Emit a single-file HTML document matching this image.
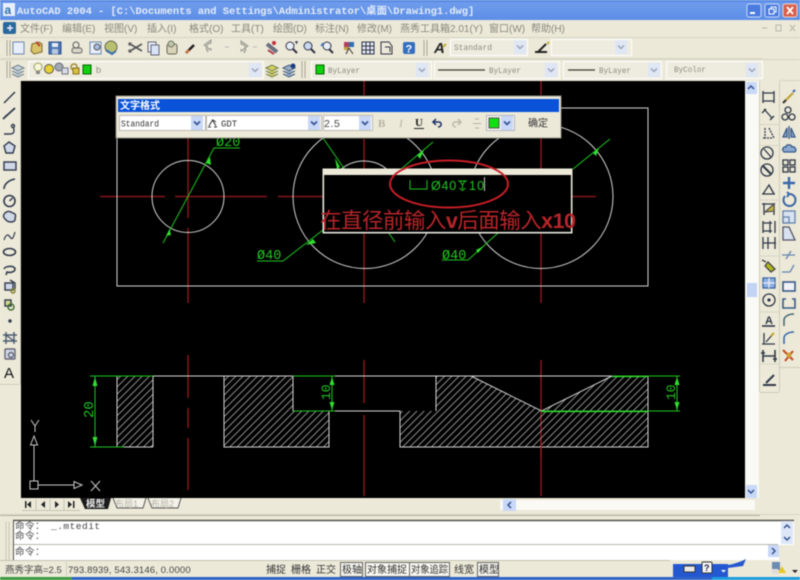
<!DOCTYPE html>
<html><head><meta charset="utf-8">
<style>
html,body{margin:0;padding:0;width:800px;height:580px;overflow:hidden;background:#ece9d8}
svg{display:block;filter:blur(0.5px)}
text{font-family:"Liberation Sans","Noto Sans CJK SC",sans-serif}
.m{font-family:"Liberation Mono","Noto Sans CJK SC",monospace}
.mn{font-size:10px;fill:#8a887c}
.cb{fill:#eeecdf;stroke:#fff;stroke-width:1}
.g{font-size:8px;fill:#8e8c80}
.w{stroke:#d4d4d4;fill:none;stroke-width:1}
.gr{stroke:#1fc41f;fill:none;stroke-width:1}
.r{stroke:#9c1a1e;fill:none;stroke-width:1.3}
.st{font-size:10px;fill:#333}
</style></head><body>
<svg width="800" height="580" viewBox="0 0 800 580" xmlns="http://www.w3.org/2000/svg">
<defs>
<linearGradient id="tb" x1="0" y1="0" x2="0" y2="1"><stop offset="0" stop-color="#4a80e2"/><stop offset=".15" stop-color="#6f9cec"/><stop offset="1" stop-color="#5c8ee6"/></linearGradient>
<pattern id="h" width="7.2" height="7.2" patternUnits="userSpaceOnUse"><path d="M-1 8.2L8.2 -1M-1 1L1 -1M6.2 8.2L8.2 6.2" stroke="#a8a8a8" stroke-width=".8"/></pattern>
<g id="ar"><rect x="-6" y="-7" width="12" height="14" fill="#dfe6f4"/><path d="M-3 -1.5L0 1.5L3 -1.5" fill="none" stroke="#9aa3b8" stroke-width="1.5"/></g>
<g id="ad"><rect x="-6" y="-7" width="12" height="14" fill="#c9d8f6"/><path d="M-3 -1.5L0 1.5L3 -1.5" fill="none" stroke="#33518f" stroke-width="1.6"/></g>
</defs>
<rect width="800" height="580" fill="#ece9d8"/>

<!-- title bar -->
<rect width="800" height="20" fill="url(#tb)"/>
<rect x="3" y="3" width="12" height="13" fill="#e8f0fb"/>
<text x="4.5" y="14" font-size="12" font-weight="bold" fill="#2a6fb0">a</text>
<text class="m" x="17" y="14" font-size="10.4" font-weight="bold" fill="#e4ecfa">AutoCAD 2004 - [C:\Documents and Settings\Administrator\桌面\Drawing1.dwg]</text>
<rect x="747" y="4" width="14" height="13" rx="2" fill="#4a7be0" stroke="#c9d8f6"/><rect x="750" y="12" width="5" height="2" fill="#fff"/>
<rect x="765" y="4" width="14" height="13" rx="2" fill="#4a7be0" stroke="#c9d8f6"/><path d="M769 9h5v5h-5zM771 9V7h5v5h-2" fill="none" stroke="#fff"/>
<rect x="783" y="4" width="14" height="13" rx="2" fill="#d9604a" stroke="#f0d0c8"/><path d="M787 7L793 14M793 7L787 14" stroke="#fff" stroke-width="1.8"/>

<!-- menu -->
<rect x="3" y="22" width="13" height="12" rx="2" fill="#28689c"/><path d="M7 28h6M10 25v6" stroke="#eef" stroke-width="1.5"/>
<text class="mn" x="20" y="32">文件(F)</text><text class="mn" x="62" y="32">编辑(E)</text><text class="mn" x="104" y="32">视图(V)</text><text class="mn" x="147" y="32">插入(I)</text><text class="mn" x="189" y="32">格式(O)</text><text class="mn" x="231" y="32">工具(T)</text><text class="mn" x="273" y="32">绘图(D)</text><text class="mn" x="315" y="32">标注(N)</text><text class="mn" x="357" y="32">修改(M)</text><text class="mn" x="400" y="32">燕秀工具箱2.01(Y)</text><text class="mn" x="489" y="32">窗口(W)</text><text class="mn" x="531" y="32">帮助(H)</text>
<path d="M762 28h5M776 25h5v6h-5zM790 25l5 6M795 25l-5 6" stroke="#b8b6a8" fill="none"/>

<!-- toolbar 1 -->
<path d="M0 37.5H800M0 58.5H762M0 59.5H800" stroke="#d8d5c4"/>
<path d="M7 40v16M10 40v16" stroke="#aaa796"/>
<path d="M424 40v16M427 40v16" stroke="#aaa796"/>
<rect x="13" y="42" width="11" height="12" fill="#e8eefa" stroke="#6d86b0"/>
<path d="M32 44l7 -2 3 2v8l-8 2-3-3z" fill="#d9c36a" stroke="#7a6a30"/><path d="M36 42l4 4" stroke="#c04030" stroke-width="2"/>
<rect x="49" y="42" width="12" height="12" fill="#4d77b5" stroke="#2f4f88"/><rect x="52" y="43" width="6" height="4" fill="#e6edf8"/><rect x="52" y="49" width="6" height="5" fill="#b8c8e0"/>
<circle cx="76" cy="45" r="3" fill="none" stroke="#555"/><rect x="72" y="48" width="10" height="5" fill="#d8d4c8" stroke="#666" rx="2"/>
<rect x="90" y="42" width="11" height="12" fill="#e8eefa" stroke="#6d86b0"/><circle cx="97" cy="47" r="3" fill="#a8bde0" stroke="#555"/>
<circle cx="111" cy="47" r="6" fill="#b8c070" stroke="#665"/><path d="M106 50l6 4 4-3" fill="none" stroke="#3e6fb5" stroke-width="2"/>
<path d="M130 44l12 7M130 51l12-7" stroke="#555" stroke-width="1.6"/><circle cx="130" cy="44" r="1.8" fill="#666"/><circle cx="130" cy="51" r="1.8" fill="#666"/>
<rect x="148" y="42" width="8" height="10" fill="#e8eefa" stroke="#667"/><rect x="151" y="45" width="8" height="10" fill="#d8e4f6" stroke="#667"/>
<rect x="167" y="44" width="10" height="10" rx="2" fill="#d8d3b8" stroke="#665"/><circle cx="171" cy="44" r="3" fill="#bcc8a8" stroke="#776"/>
<path d="M186 53l8-8" stroke="#222" stroke-width="2.6"/><path d="M186 53l3-3" stroke="#c87040" stroke-width="2.6"/>
<path d="M208 52c-3-3-2-8 3-9v-3l-7 5 7 5v-2" fill="#c9c9bc" stroke="#9a9a90"/><path d="M225 47h4" stroke="#bbb"/>
<path d="M244 53c3-3 2-8-3-9v-3l7 5-7 5v-2" fill="#c9c9bc" stroke="#9a9a90"/><path d="M253 47h4" stroke="#bbb"/>
<path d="M267 44l10 8" stroke="#6a7080" stroke-width="4"/><circle cx="274" cy="43" r="2" fill="#bf3040"/><path d="M268 50l6 4" stroke="#b04050" stroke-width="2"/>
<circle cx="290" cy="46" r="4" fill="#e6edf8" stroke="#334"/><path d="M293 49l4 4" stroke="#334" stroke-width="2"/><path d="M295 42h3M296.5 41v3" stroke="#334"/>
<circle cx="308" cy="46" r="4" fill="#c8d8f0" stroke="#334"/><path d="M311 49l4 4" stroke="#334" stroke-width="2"/>
<circle cx="327" cy="46" r="4" fill="#e6edf8" stroke="#334"/><path d="M329 49l4 4" stroke="#334" stroke-width="2"/><path d="M323 43l-2 3" stroke="#3a7ad0" stroke-width="1.5"/>
<rect x="344" y="42" width="5" height="5" fill="#b04060"/><rect x="349" y="42" width="5" height="5" fill="#3070b0"/><rect x="344" y="47" width="5" height="3" fill="#c0a040"/><path d="M349 48l-3 6M349 48l4 6" stroke="#333"/>
<rect x="362" y="42" width="12" height="12" fill="#dfe7f4" stroke="#334"/><path d="M362 46h12M362 50h12M366 42v12M370 42v12" stroke="#334"/>
<path d="M381 42h8l3 4v8h-11z" fill="#ece9d8" stroke="#334"/><path d="M385 47h5v5" stroke="#334" fill="none"/>
<rect x="403" y="42" width="12" height="12" rx="2" fill="#356fc0"/><text x="405.5" y="52.5" font-size="11" font-weight="bold" fill="#fff">?</text>
<text x="434" y="53" font-size="15" font-weight="bold" font-style="italic" fill="#252525">A</text><path d="M443 47l3-3" stroke="#c0b040" stroke-width="2"/>
<rect x="450.500" y="39.500" width="77" height="16" class="cb"/><text class="m g" x="454" y="50" style="font-size:8px" textLength="38" lengthAdjust="spacingAndGlyphs">Standard</text><use href="#ar" x="520" y="47"/>
<path d="M535 52h12M538 52l8-8" stroke="#222" stroke-width="2"/><path d="M547 44l2-2" stroke="#c0b040" stroke-width="2"/>
<rect x="551.500" y="39.500" width="80" height="16" class="cb"/><use href="#ar" x="621" y="47"/>

<!-- toolbar 2 -->
<path d="M7 61v17M10 61v17M302 61v17M305 61v17" stroke="#aaa796"/>
<path d="M12 68l6-3 6 3-6 3zM12 71l6 3 6-3M12 74l6 3 6-3" fill="#c7d0d8" stroke="#6d7f8e"/>
<rect x="28.500" y="61.500" width="235" height="17" class="cb"/>
<circle cx="38" cy="67" r="4" fill="#f6f6d8" stroke="#a0a060"/><rect x="36" y="71" width="4" height="3" fill="#888"/>
<circle cx="49" cy="69" r="4.5" fill="#e8d030" stroke="#555"/>
<circle cx="59" cy="67" r="4" fill="#a0aab0" stroke="#667"/><rect x="62" y="68" width="6" height="6" fill="#d8dce4" stroke="#778"/>
<circle cx="74" cy="67" r="3" fill="none" stroke="#a08830" stroke-width="1.5"/><rect x="73" y="68" width="6" height="6" fill="#d8c040" stroke="#887020"/>
<rect x="83" y="65" width="8" height="9" fill="#10d010" stroke="#060"/>
<text class="g" x="96" y="73" style="font-size:9px">b</text>
<use href="#ar" x="255" y="70"/>
<path d="M266 68l6-3 6 3-6 3zM266 71l6 3 6-3M266 74l6 3 6-3" fill="#d8d060" stroke="#6d7f4e"/>
<path d="M283 68l6-3 6 3-6 3zM283 71l6 3 6-3M283 74l6 3 6-3" fill="#9eb0c8" stroke="#445a7e"/><circle cx="293" cy="66" r="2.5" fill="#1c3e80"/>
<rect x="311.500" y="61.500" width="120" height="17" class="cb"/><rect x="316" y="65" width="8" height="9" fill="#10d010" stroke="#060"/><text class="m g" x="328" y="73" textLength="32" lengthAdjust="spacingAndGlyphs">ByLayer</text><use href="#ar" x="422" y="70"/>
<rect x="434.500" y="61.500" width="125" height="17" class="cb"/><path d="M438 70h47" stroke="#3a3a30" stroke-width="1.2"/><text class="m g" x="489" y="73" textLength="32" lengthAdjust="spacingAndGlyphs">ByLayer</text><use href="#ar" x="551" y="70"/>
<rect x="563.500" y="61.500" width="98" height="17" class="cb"/><path d="M568 70h27" stroke="#3a3a30" stroke-width="1.2"/><text class="m g" x="599" y="73" textLength="32" lengthAdjust="spacingAndGlyphs">ByLayer</text><use href="#ar" x="654" y="70"/>
<rect x="666.500" y="61.500" width="96" height="17" class="cb"/><text class="m g" x="674" y="72" textLength="32" lengthAdjust="spacingAndGlyphs">ByColor</text><use href="#ar" x="752" y="70"/>

<!-- drawing -->
<rect x="21" y="81" width="724" height="417" fill="#000"/>
<!-- scrollbars -->
<rect x="745" y="81" width="14" height="419" fill="#f9f9f5"/>
<rect x="746" y="82" width="11" height="12" fill="#c9d8f6"/><path d="M748 89l3-3 3 3" fill="none" stroke="#33518f" stroke-width="1.5"/>
<rect x="747" y="283" width="10" height="14" fill="#c3d3f4"/>
<rect x="746" y="485" width="11" height="13" fill="#c9d8f6"/><path d="M748 490l3 3 3-3" fill="none" stroke="#33518f" stroke-width="1.5"/>

<g>
<!-- center lines -->
<path class="r" d="M188 138V218M188 228V303M364 81V95M364 139V303M541 81V95M541 138V303M100 196.5H165M175 196.5H267M278 196.5H325M338 196.5H490M503 196.5H515M526 196.5H596"/>
<path class="r" d="M188 355V398M188 408V428M188 438V490M364 360V403M364 415V496M541 360V496"/>
<!-- upper view -->
<path class="w" d="M117 138V286H648V108H561M117 108V96"/>
<circle class="w" cx="188" cy="196.5" r="36"/>
<circle class="w" cx="365" cy="196.5" r="72"/>
<circle class="w" cx="364" cy="197" r="36"/>
<circle class="w" cx="541" cy="196.5" r="72"/>
<!-- upper dims -->
<path class="gr" d="M163 243L214 148H240M257 261H283L323 230M323 138L395 242M433 142L400 170M573 169L610 139M498 233L468 260H442"/>
<path d="M166 236l3.5 -7 1.5 6zM210 157l-4 6 5 2zM306 245l7-6 3 4zM335 158l5 9-3 2z M424 150l-7 5 3 4zM599 148l-6 5 3 3zM484 246l-6 7-2-3z" fill="#2ee02e"/>
<text class="m" x="216" y="146" fill="#22c622" font-size="13.5">Ø20</text><text class="m" x="257" y="259" fill="#22c622" font-size="13.5">Ø40</text><text class="m" x="442" y="259" fill="#22c622" font-size="13.5">Ø40</text>

<!-- lower view hatch -->
<path d="M117 376H153V447H117z M224 376H293V411H329V447H224z M436 376H471L541.5 411L612 376H648V447H400V411H436z" fill="url(#h)"/>
<path class="w" d="M117 376H648V447H400V411H293V376M117 376V447M153 376V447M224 376V447H329V411M90 447H153M436 376V411M471 376L541.5 411L612 376"/>
<path class="r" d="M541 440V458" stroke-width="1"/>
<!-- lower dims -->
<path class="gr" d="M90 376H153M90 447H124M95 376V447M293 376H335M293 411H335M332 376V411M541 411H680M612 376H680M677 376V411"/>
<path stroke="#2ee02e" stroke-width="1.2" fill="none" d="M612 376.5H648M541 411.5H648"/>
<path d="M95 377l-2.5 9h5zM95 446l-2.5-9h5zM332 377l-2.5 8h5zM332 410l-2.5-8h5zM677 377l-2.5 8h5zM677 410l-2.5-8h5z" fill="#2ee02e"/>
<text class="m" transform="translate(93 418) rotate(-90)" fill="#22c622" font-size="14">20</text>
<text class="m" transform="translate(330 400) rotate(-90)" fill="#22c622" font-size="13">10</text>
<text class="m" transform="translate(675 400) rotate(-90)" fill="#22c622" font-size="13">10</text>
<!-- UCS -->
<g stroke="#c8c8c8" fill="none" stroke-width="1"><rect x="30" y="481" width="8" height="8"/><path d="M34 481V445M38 485H74M34 436l-3.5 9h7zM82 485l-8-3.5v7zM31 420l4 6 4-6M35 426v6M91 481l9 10M100 481l-9 10"/></g>
</g>

<!-- in-place editor -->
<rect x="323" y="169" width="249" height="64" fill="#000" stroke="#ece9d8"/>
<rect x="323" y="168.5" width="249" height="6.5" fill="#ece9d8"/>
<path d="M571.5 175V233M323 232.5H572M323.5 175V233" stroke="#e4e4dc" stroke-width="1.2"/>
<text x="320" y="228" font-size="21.5" fill="#b8252a" textLength="256">在直径前输入<tspan font-weight="bold">v</tspan>后面输入<tspan font-weight="bold">x10</tspan></text>
<ellipse cx="449" cy="184" rx="59" ry="23.5" fill="none" stroke="#c81e26" stroke-width="2"/>
<path d="M410 180v9h17v-9" fill="none" stroke="#24c024" stroke-width="1"/>
<text x="431" y="190" font-size="12.5" letter-spacing=".8" fill="#22c622">Ø40</text>
<path d="M458 181h9M460 181l2.5 4 2.500-4M462.5 185v4M459.500 188l3 2.500 3-2.500" fill="none" stroke="#22c622"/>
<text x="469" y="190" font-size="12.5" letter-spacing="1.2" fill="#22c622">10</text>
<path d="M484.5 177v14" stroke="#ccc"/>

<!-- mtext dialog -->
<rect x="116" y="96" width="445" height="42" fill="#ece9d8" stroke="#8f8d80"/>
<rect x="118" y="99" width="441" height="13" fill="#0a52d8"/>
<text x="120" y="109" font-size="10" font-weight="bold" fill="#fff">文字格式</text>
<rect x="119.500" y="115.500" width="86" height="15" fill="#fff" stroke="#bcbab0"/><text class="m" x="121" y="126.5" font-size="9" fill="#333" textLength="38" lengthAdjust="spacingAndGlyphs">Standard</text><use href="#ad" x="197" y="123"/>
<rect x="206.500" y="115.500" width="115" height="15" fill="#fff" stroke="#bcbab0"/><path d="M209 126l3.500-6 3.500 6M213 120l3 2M208 127h3M214 127h3" fill="none" stroke="#333"/><text class="m" x="221" y="126.5" font-size="9" fill="#333">GDT</text><use href="#ad" x="314" y="123"/>
<rect x="323.500" y="115.500" width="49" height="15" fill="#fff" stroke="#bcbab0"/><text x="324" y="127" font-size="10.5" letter-spacing=".6" fill="#444">2.5</text><use href="#ad" x="365" y="123"/>
<text x="378" y="127" font-size="11" font-weight="bold" fill="#b5b3a4" style="font-family:'Liberation Serif',serif">B</text>
<text x="399" y="127" font-size="11" font-style="italic" fill="#b5b3a4" style="font-family:'Liberation Serif',serif">I</text>
<text x="415" y="126" font-size="11" font-weight="bold" fill="#222" style="font-family:'Liberation Serif',serif">U</text><path d="M414 128.5h10" stroke="#222"/>
<path d="M433 122h6c3 0 3 5-1 5M436 119l-3 3 3 3" fill="none" stroke="#1c2f66" stroke-width="1.5"/>
<path d="M461 122h-6c-3 0-3 5 1 5M458 119l3 3-3 3" fill="none" stroke="#bbb9aa" stroke-width="1.5"/>
<path d="M475 119h4M473 123.5h8M475 128h4" stroke="#b5b3a4"/>
<rect x="486.500" y="115.500" width="28" height="15" fill="#f4f3ea" stroke="#b4b6c4"/><rect x="489" y="118" width="10" height="10" fill="#10e010" stroke="#555"/><use href="#ad" x="507" y="123"/>
<text x="528" y="126.5" font-size="10" fill="#333">确定</text>

<!-- left toolbar -->
<rect x="0" y="84" width="21" height="300" fill="#ece9d8"/><path d="M20.5 81V384M0 384.5H20" stroke="#d0cdbc"/>
<g style="fill:none;stroke:#2f3a4e;stroke-width:1.4">
<path d="M4 103L15 92"/><path d="M3 119L15 108M5 117l2-2M13 110l2-2" stroke-width="1.8"/>
<path d="M4 134h6c4 0 5-3 3-7"/><circle cx="13" cy="126" r="1.5"/>
<path d="M9 142l6 4-2 7H6l-2-7z" fill="#cfd8e6"/><rect x="4" y="162" width="12" height="8" fill="#cfd8e6"/>
<path d="M4 189c0-5 5-9 11-10" stroke-width="1.6"/>
<circle cx="9.5" cy="201" r="5.5" stroke-width="1.6"/><path d="M9.5 201l3-3"/>
<path d="M5 213c3-3 6-1 8 0 3 1 3 3 2 5 1 3-2 4-4 4-3 0-4-1-6-3-2-2-2-4 0-6z" fill="#cfd8e6"/>
<path d="M4 240c2-6 4-6 6-3s3 2 5-5" stroke-width="1.2"/>
<ellipse cx="9.5" cy="252" rx="6" ry="3.5" stroke-width="1.6"/>
<path d="M4 269c1-3 10-4 11 0 0 3-5 4-8 3l-1 3" stroke-width="1.6"/>
<rect x="5" y="283" width="8" height="7" fill="#cfd8e6"/><path d="M10 280l5 3v6"/><circle cx="13" cy="291" r="2" stroke="#7a7a20"/>
<rect x="5" y="300" width="6" height="6" fill="#d8d890"/><circle cx="11" cy="307" r="3" stroke="#3c6a2a"/>
<circle cx="10" cy="321" r="1" fill="#2f3a4e"/>
<path d="M6 332v12M14 332v12M3 335h14M3 341h14M6 335l8 6" stroke="#4a5a70"/>
<rect x="5" y="349" width="10" height="10" rx="1" fill="#cfd8e6" stroke="#667"/><circle cx="11" cy="355" r="2.5" stroke="#667"/>
</g>
<text x="4" y="378" font-size="15" fill="#111">A</text>

<!-- right toolbars -->
<path d="M759.5 81V392M760 392.5H779M779.5 81V392M780 367.5H800" stroke="#cfccba"/>
<path d="M760 124.5H779M760 145.5H779M760 200H779M760 256H779M760 312H779M760 364H779M780 80.5H800" stroke="#d8d5c4"/>
<g fill="none" stroke="#303848" stroke-width="1.3">
<path d="M763 91v12M774 91v12M763 93h11M763 101h11"/>
<path d="M764 109l8 9M762 113l4-4M770 120l4-4"/>
<path d="M765 128v10h8M769 128l5 10M763 138h2" stroke-dasharray="2 1"/>
<circle cx="767" cy="153" r="6"/><path d="M764 149l7 8"/>
<circle cx="767" cy="170" r="6"/><path d="M763 166l8 8" stroke-width="2"/>
<path d="M762 194h13M763 194l6-9 5 9"/>
<path d="M764 203v12M774 203v12M762 204h13"/><path d="M765 212l9-8v7z" fill="#c8b840" stroke="#555"/>
<path d="M763 221v12M770 221v12M763 223h9M763 231h9M775 221v12"/>
<path d="M763 237v12M768 237v12M775 237v12M763 243h13"/>
<path d="M762 260l4 2M768 262l7 7-4 3-6-6z" fill="#b0b820" stroke="#444"/>
<rect x="763" y="278" width="12" height="10" fill="#8fb0e0" stroke="#3a66a8"/><path d="M769 278v10M763 283h12" stroke="#e8eefa"/>
<circle cx="769" cy="300" r="6"/><circle cx="769" cy="300" r="1" fill="#303848"/>
<path d="M762 326h13" stroke-width="1.6"/><text x="765" y="324" font-size="11" font-weight="bold" fill="#303848" stroke="none">A</text>
<path d="M764 333v11M762 344h13M766 342l7-8"/><path d="M771 336l3-3" stroke="#c0a030" stroke-width="2"/>
<path d="M763 350v12M775 350v12M763 356h12M761 353h4M773 359h4" stroke-width="1.6"/>
<path d="M763 385h13M766 383l8-8" stroke-width="2"/>
<path d="M783 103l10-10" stroke="#c0a030" stroke-width="2"/><path d="M783 103l3-3" stroke="#3a3a3a" stroke-width="2"/><path d="M793 92l2-2" stroke="#4060c0" stroke-width="2"/>
<circle cx="785" cy="117" r="3"/><circle cx="792" cy="117" r="3"/><circle cx="788" cy="110" r="3"/>
<path d="M789 126v13M787 128l-4 9h4zM791 128l4 9h-4z" fill="#8aa8d0" stroke="#3a5a88"/>
<path d="M784 152c-3-3 0-6 2-5 0-3 5-3 6 0 3-1 5 3 3 5z" fill="#8aa8d0" stroke="#3a5a88"/>
<rect x="783" y="160" width="5" height="5"/><rect x="790" y="160" width="5" height="5"/><rect x="783" y="167" width="5" height="5"/><rect x="790" y="167" width="5" height="5"/>
<path d="M789 177v12M783 183h12" stroke="#3a66a8" stroke-width="2.4"/>
<path d="M785 196a6 6 0 1 0 4-2M787 192l2 2-2 3" stroke="#3a66a8" stroke-width="2"/>
<rect x="783" y="211" width="12" height="12" fill="#d8e2f0" stroke="#6685b0"/><rect x="783" y="217" width="6" height="6" stroke="#6685b0"/>
<path d="M783 240v-13h6l6 13z" fill="#d8e2f0" stroke="#556"/>
<path d="M782 255h13M786 259l5-8" stroke="#6685b0"/>
<path d="M782 272h8M790 272l4-7" stroke="#6685b0"/>
<rect x="783" y="282" width="12" height="9" fill="#f0f2f8" stroke="#3a5a88" stroke-width="1.6"/>
<path d="M786 299h-3v9h12v-9h-3" stroke="#3a5a88" stroke-width="1.6"/>
<path d="M784 326v-6c0-3 4-6 10-6" stroke="#4a6a70" stroke-width="1.6"/>
<path d="M784 344v-6c0-3 4-6 10-6" stroke="#3a6aa8" stroke-width="1.6"/>
<path d="M783 350l10 10M793 351l-8 10" stroke="#c04a20" stroke-width="2"/><circle cx="789" cy="355" r="2.5" fill="#d0a030" stroke="none"/>
</g>

<!-- tabs -->
<rect x="21" y="498" width="738" height="16" fill="#ece9d8"/>
<rect x="500" y="500" width="255" height="10" fill="#faf9f3"/>
<rect x="503" y="499" width="13" height="12" fill="#c9d8f6"/><path d="M511 502l-3 3 3 3" fill="none" stroke="#33518f" stroke-width="1.5"/>
<g fill="#222"><path d="M25 501v7h1.5v-7zM31 501l-4 3.5 4 3.5z"/><path d="M45 501l-4 3.5 4 3.5z"/><path d="M55 501l4 3.5-4 3.5z"/><path d="M68 501l4 3.5-4 3.5zM73 501v7h1.5v-7z"/></g>
<path d="M22 510.5H80M36 499v11M50 499v11M64 499v11" stroke="#c6c3b4"/>
<path d="M80 498h31l-3 11h-23z" fill="#1a1a1a"/><text x="86" y="507" font-size="9.5" font-weight="bold" fill="#eee">模型</text>
<path d="M113 498l4 10h26l3-10" fill="#f4f2e8" stroke="#555"/><text x="115" y="507" font-size="9" fill="#b5b3a4">布局1</text>
<path d="M148 498l4 10h26l3-10" fill="#f4f2e8" stroke="#555"/><text x="151" y="507" font-size="9" fill="#b5b3a4">布局2</text>

<!-- command window -->
<path d="M0 514.5H800" stroke="#d8d5c4"/><path d="M0 515.5H760" stroke="#b5b2a1"/>
<path d="M6 522v40M9 522v40" stroke="#c9c6b5"/>
<rect x="13" y="520" width="781" height="41" fill="#fff"/>
<path d="M13 520.5H794" stroke="#55524a" stroke-width="1.5"/><path d="M13.5 520V561" stroke="#55524a"/>
<path d="M14 544.5H778" stroke="#b8b6aa"/>
<text x="15" y="529" font-size="9.5" fill="#444" letter-spacing=".5">命令：</text><text class="m" x="51" y="529" font-size="9.5" fill="#444" letter-spacing=".5">_.mtedit</text>
<text x="15" y="539" font-size="9.5" fill="#444" letter-spacing=".5">命令：</text>
<text x="15" y="555" font-size="9.5" fill="#444" letter-spacing=".5">命令：</text>
<rect x="781" y="521" width="12" height="12" fill="#dce6f8"/><path d="M784 528l3-3 3 3" fill="none" stroke="#33518f" stroke-width="1.5"/>
<rect x="781" y="533" width="12" height="11" fill="#dce6f8"/><path d="M784 537l3 3 3-3" fill="none" stroke="#33518f" stroke-width="1.5"/>
<rect x="768" y="545" width="11" height="12" fill="#c9d8f6"/><path d="M772 548l3 3-3 3" fill="none" stroke="#33518f" stroke-width="1.5"/>
<rect x="779" y="545" width="15" height="16" fill="#ece9d8"/>

<!-- status bar -->
<rect x="0" y="560" width="800" height="18" fill="#ece9d8"/>
<path d="M0 560.5H670" stroke="#c4c1b0"/>
<text x="5" y="573" font-size="9.5" fill="#444">燕秀字高=2.5</text>
<text x="68" y="573" font-size="9.5" letter-spacing=".15" fill="#444">793.8939, 543.3146, 0.0000</text>
<path d="M66.5 562v14" stroke="#d0cdbc"/>
<text class="st" x="266" y="573">捕捉</text><text class="st" x="291" y="573">栅格</text><text class="st" x="316" y="573">正交</text>
<rect x="340.500" y="562.500" width="22" height="14" fill="#f4f3ec" stroke="#666"/><text class="st" x="342" y="573">极轴</text>
<rect x="365.500" y="562.500" width="45" height="14" fill="#f8f7f0" stroke="#666"/><text class="st" x="367" y="573">对象捕捉</text>
<rect x="409.500" y="562.500" width="40" height="14" fill="#f8f7f0" stroke="#666"/><text class="st" x="411" y="573" textLength="37" lengthAdjust="spacingAndGlyphs">对象追踪</text>
<text class="st" x="454" y="573">线宽</text>
<rect x="477.500" y="562.500" width="21" height="14" fill="#f4f3ec" stroke="#666"/><text class="st" x="479" y="573">模型</text>
<path d="M673 564h55v13h-55z" fill="#2458d0"/>
<path d="M728 565c6-1 12-3 18-6l-3 7-15 2z" fill="#2458d0"/>
<rect x="684" y="566" width="11" height="6" fill="#e8e8e8" stroke="#333"/>
<rect x="702" y="562" width="10" height="11" rx="1" fill="#f4f4f4" stroke="#333"/><text x="704" y="571" font-size="9" font-weight="bold" fill="#224">?</text>
<path d="M721 570h5l-2.5 2.5z" fill="#fff"/>
<path d="M772 562h8v8h-8z" fill="#6d8ab0"/><path d="M778 573l4-7 4 7z" fill="#e8c820"/><rect x="772" y="569" width="6" height="5" fill="#ddd"/>
<path d="M792 570h6l-3 3z" fill="#222"/>
<!-- taskbar -->
<rect x="0" y="577" width="800" height="3" fill="#2f62c8"/>
<rect x="0" y="577" width="72" height="3" fill="#3c9a40"/>
<rect x="712" y="577" width="88" height="3" fill="#1d9ce0"/>
</svg>
</body></html>
